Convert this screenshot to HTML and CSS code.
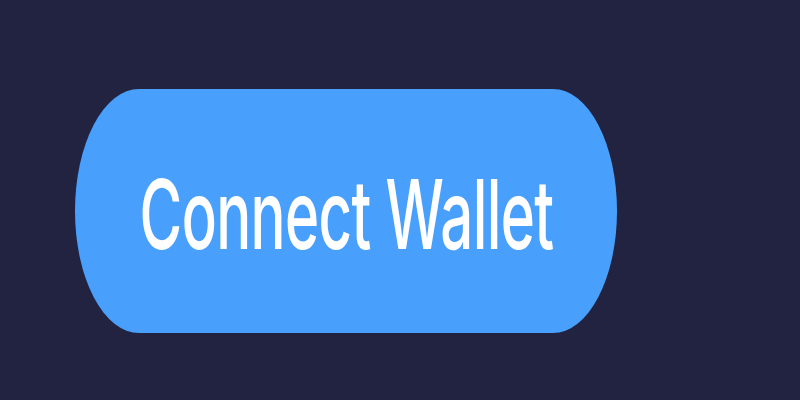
FILE: index.html
```html
<!DOCTYPE html>
<html>
<head>
<meta charset="utf-8">
<link rel="stylesheet" href="styles.css">
</head>
<body>
<div class="stage">
  <button class="connect-btn"><span class="label">Connect Wallet</span></button>
</div>
</body>
</html>
```
FILE: styles.css
```css
html, body {
  margin: 0;
  padding: 0;
  background: #212341;
  width: 800px;
  height: 400px;
  overflow: hidden;
}
.stage {
  padding: 89px 0 0 75px;
}
.connect-btn {
  display: flex;
  align-items: center;
  justify-content: center;
  width: 542px;
  height: 244px;
  border: none;
  padding: 0;
  margin: 0;
  background: #48a0fc;
  border-radius: 64px / 122px;
}
.label {
  display: block;
  font-family: Inter, Roboto, "Liberation Sans", sans-serif;
  font-weight: 500;
  font-size: 96px;
  line-height: 1;
  color: #ffffff;
  white-space: nowrap;
  letter-spacing: -1px;
  transform: translate(1px, 3px) scaleX(0.606);
}
```
